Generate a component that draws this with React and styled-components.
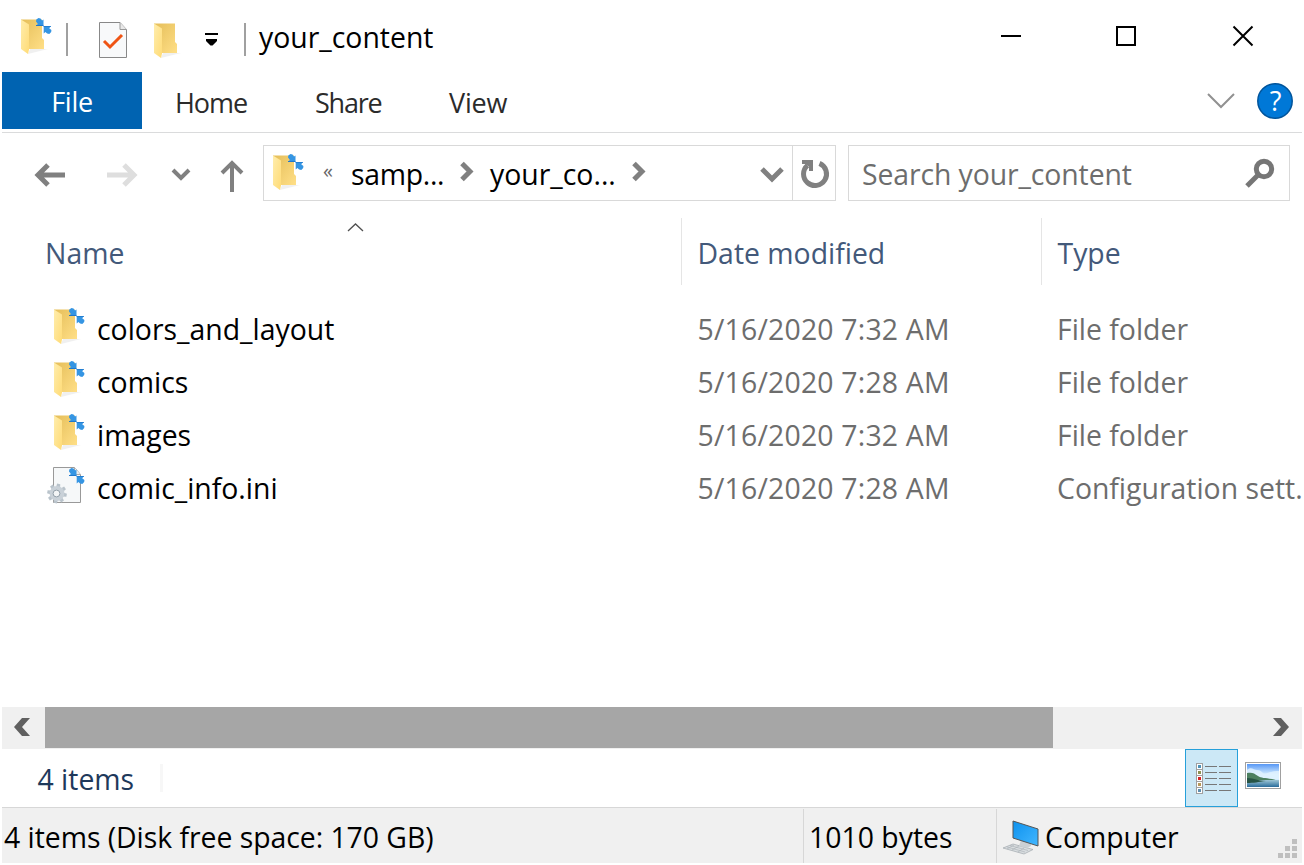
import React from "react";
import styled, { createGlobalStyle } from "styled-components";

const Global = createGlobalStyle`
  * { box-sizing: border-box; }
  body { margin: 0; background: #fff; font-family: "Open Sans", "Noto Sans", sans-serif; font-size: 28.4px; overflow: hidden; }
  svg { display: block; flex: none; overflow: visible; }
`;
const Window = styled.main`
  width: 1304px; height: 865px; padding: 0 2px 2px; background: #fff;
  display: flex; flex-direction: column; overflow: hidden;
`;
const Text = styled.span`
  flex: none; white-space: pre; line-height: 38px;
  width: ${p => p.$w ? p.$w + "px" : "auto"};
  margin-left: ${p => p.$ml || 0}px;
  padding-top: ${p => p.$drop || 0}px;
  letter-spacing: ${p => p.$ls || 0}px;
  color: ${p => p.$color || "#000"};
`;
const TabText = styled(Text)`font-size: 27px; letter-spacing: ${p => p.$ls ?? -0.8}px;`;
const Overflow = styled(Text)`font-size: 20px; line-height: 32px;`;
const Glyph = styled.svg`
  margin: ${p => p.$mt || 0}px 0 0 ${p => p.$ml || 0}px;
`;
const TitleBar = styled.header`
  height: 72px; display: flex; align-items: flex-start; padding-top: 16px; flex: none;
`;
const Divider = styled.i`
  width: 2px; height: 33px; background: #a0a0a0; margin: 7px 0 0 ${p => p.$ml}px; flex: none;
`;
const Ribbon = styled.nav`
  height: 61px; display: flex; border-bottom: 1px solid #dadbdc; flex: none;
`;
const FileTab = styled.button`
  width: 140px; height: 57px; border: 0; padding: 3px 0 0; background: #0063b1; color: #fff; font: inherit;
  display: flex; align-items: center; justify-content: center;
`;
const Tab = styled.div`
  width: ${p => p.$w}px; padding: 12px 0 0 33px; display: flex; align-items: flex-start;
`;
const RibbonEnd = styled.div`
  margin-left: auto; display: flex; padding: 10px 8px 0 0;
`;
const NavBar = styled.div`
  height: 85px; padding-top: 12px; display: flex; flex: none;
`;
const NavButtons = styled.div`
  width: 261px; height: 56px; display: flex; align-items: flex-start; padding-top: 14px;
`;
const Field = styled.div`
  width: ${p => p.$w}px; height: 56px; border: 1px solid #d9d9d9; display: flex; align-items: flex-start;
  margin-right: 12px; padding-top: 9px; flex: none;
`;
const Refresh = styled.div`
  width: 43px; height: 54px; border-left: 1px solid #d9d9d9; margin: -9px 0 0 auto; padding: 13px 0 0 7px;
`;
const HeaderRow = styled.div`
  display: grid; grid-template-columns: 680px 360px 1fr; height: 67px; flex: none;
`;
const HeaderCell = styled.div`
  border-right: ${p => p.$last ? 0 : 1}px solid #e5e5e5; padding: 16px 0 0 ${p => p.$pl}px; display: flex;
`;
const Files = styled.section`
  padding-top: 17px; height: 422px; flex: none;
`;
const FileRow = styled.div`
  height: 53px; display: grid; grid-template-columns: 95px 600.500px 359.500px 1fr; align-items: center; overflow: hidden;
`;
const IconCell = styled.div`padding: 0 0 ${p => p.$lift}px 42px;`;
const ScrollBar = styled.div`
  height: 42px; background: #f0f0f0; display: flex; align-items: flex-start; flex: none;
`;
const ScrollButton = styled.div`width: 43px; padding: 11px 0 0 12px;`;
const Thumb = styled.div`width: 1008px; height: 41px; background: #a6a6a6;`;
const Summary = styled.div`
  height: 59px; border-bottom: 1px solid #d7d7d7; display: flex; align-items: flex-start; padding-left: 35.500px; flex: none;
`;
const SummaryEdge = styled.i`width: 3px; height: 28px; background: #f7f7f7; margin: 15px 0 0 25.500px;`;
const ViewButtons = styled.div`margin-left: auto; display: flex; padding-right: 21px;`;
const DetailsButton = styled.div`
  width: 53px; height: 58px; border: 1px solid #26a0da; background: #cce8f6; padding: 13px 0 0 10px;
`;
const StatusBar = styled.footer`
  height: 55px; background: #f0f0f0; display: flex; padding-top: 1px; flex: none;
`;
const StatusPart = styled.div`
  width: ${p => p.$w ? p.$w + "px" : "auto"}; flex: ${p => p.$w ? "none" : 1};
  border-left: ${p => p.$line ? 1 : 0}px solid #d7d7d7;
  padding: 9px 0 0 ${p => p.$pl}px; display: flex;
`;

function CompressMark() {
  return (
    <g>
      <path d="M25 7.500 25.300 5.500 27.500 4 29.500 4.600 31 6.400 32.500 5.400v6.400H25l1.900-1.900z" fill="#3595e3" />
      <path d="M32.700 12h7.300l-1.800 2.200 2.200 1.800-.2 2-1.900 2-2.200-.6-1.700-1.500-1.700 1.700z" fill="#3595e3" />
      <path d="M25 11h7.500v1h7.500v.8h-7.500v-.8H25z" fill="#1f78cd" />
    </g>
  );
}

function Folder({ compressed = true, ml, mt }) {
  return (
    <Glyph width="44" height="44" viewBox="0 0 44 44" $ml={ml} $mt={mt}>
      <defs>
        <linearGradient id="folderBack" x1="0" x2="1" y2="1"><stop stopColor="#e5be59" /><stop offset="1" stopColor="#ffdf87" /></linearGradient>
        <linearGradient id="folderFlap" x1="0" x2="1" y2="1"><stop stopColor="#ffedac" /><stop offset="1" stopColor="#ffdb76" /></linearGradient>
      </defs>
      <path d="M17 40 37 35H19z" fill="#f0f0f0" />
      <path d="M10 5.500h21v18.500l2 2v9H10z" fill="url(#folderBack)" />
      <path d="m10 5.500 8 5v25l-1 4.500-7-5z" fill="url(#folderFlap)" />
      {compressed && <CompressMark />}
    </Glyph>
  );
}

function IniFile() {
  const teeth = [0, 45, 90, 135, 180, 225, 270, 315];
  return (
    <svg width="44" height="44" viewBox="0 0 44 44">
      <path d="M9.500 3.500h21l6 7v28h-27z" fill="#f6f8f9" stroke="#999" />
      <path d="M30.500 3.500v7h6" fill="#eee" stroke="#aaa" />
      <g transform="translate(13 29.500)">
        {teeth.map(a => <path key={a} d="M-2-6-1.600-9.800H1.600L2-6z" fill="#b9c3cb" transform={`rotate(${a + 10})`} />)}
        <circle r="7.400" fill="#c9d1d8" />
        <circle r="3.400" cx="-.5" fill="#f3f5f6" stroke="#93a0aa" />
      </g>
      <CompressMark />
    </svg>
  );
}

function Stroke({ d, w, h, width = 4, color = "#808080", ml, mt }) {
  return <Glyph width={w} height={h} viewBox={`0 0 ${w} ${h}`} $ml={ml} $mt={mt}><path d={d} fill="none" stroke={color} strokeWidth={width} /></Glyph>;
}

function DetailsIcon() {
  const marks = ["#4b91b7", "#8c9252", "#d42222", "#b79959", "#5b8eb1"];
  return (
    <svg width="35" height="31" viewBox="0 0 35 31">
      {marks.map((c, i) => (
        <g key={c} transform={`translate(0 ${i * 6})`}>
          <rect x=".5" y=".5" width="6" height="6" fill="#fff" stroke="#a0a0a0" />
          <rect x="2" y="2" width="3" height="3" fill={c} />
          <path d="M9 3.500h12M23 3.500h12" stroke="#777" />
        </g>
      ))}
    </svg>
  );
}

function PictureIcon() {
  return (
    <Glyph width="36" height="27" viewBox="0 0 36 27" $ml={7} $mt={13}>
      <defs>
        <linearGradient id="sky" x2="0" y2="1"><stop stopColor="#5797f5" /><stop offset=".6" stopColor="#d3edff" /></linearGradient>
        <linearGradient id="lake" x2="0" y2="1"><stop stopColor="#9fc6d5" /><stop offset="1" stopColor="#296c9b" /></linearGradient>
      </defs>
      <rect x=".5" y=".5" width="35" height="26" fill="#fff" stroke="#a0a0a0" />
      <path d="M2 2h32v17H2z" fill="url(#sky)" />
      <path d="M2 8c4-4 7 0 10 0s4 1 6 3 6-2 16-2v8H2z" fill="#e1f2ff" opacity=".8" />
      <path d="M2 11c5-1 7 0 11 3s9 1 21 5H2z" fill="#4c8060" />
      <path d="M2 18h32v7H2z" fill="url(#lake)" />
      <path d="M2 16c8 0 10 3 19 3-8 1-12 2-19 2z" fill="#275445" />
    </Glyph>
  );
}

function ComputerIcon() {
  return (
    <Glyph width="38" height="36" viewBox="0 0 38 36" $ml={4} $mt={2}>
      <defs><linearGradient id="screen" x2="1" y2="1"><stop stopColor="#0d91ed" /><stop offset="1" stopColor="#43b7ff" /></linearGradient></defs>
      <path d="m1 28 10-4 20 5.500-9 4.500z" fill="#d9dde0" stroke="#a0a8ae" strokeWidth=".7" />
      <path d="m5 27 18 5M8 25.500l18 5M12 25l-7 4M17 26l-7 4M22 28l-6 4" stroke="#a7aeb3" strokeWidth=".6" />
      <path d="m19 20 10 3v3l-4 2-8-2z" fill="#cbd0d4" />
      <path d="m11 1 25 8v17L11 18z" fill="url(#screen)" stroke="#555" />
    </Glyph>
  );
}

const files = [
  ["colors_and_layout", "5/16/2020 7:32 AM", "File folder"],
  ["comics", "5/16/2020 7:28 AM", "File folder"],
  ["images", "5/16/2020 7:32 AM", "File folder"],
  ["comic_info.ini", "5/16/2020 7:28 AM", "Configuration sett."],
];

export default function App() {
  return (
    <Window>
      <Global />
      <TitleBar>
        <Folder ml={9} mt={-2} />
        <Divider $ml={11} />
        <Glyph width="28" height="36" viewBox="0 0 28 36" $ml={31} $mt={6}>
          <path d="M.5.500h20.500l6.500 7v28H.500z" fill="#f8f9fa" stroke="#888" />
          <path d="M21 .500v7h6.500" fill="#e8e8e8" stroke="#999" />
          <path d="m5 19 6 6L23 13" fill="none" stroke="#ef5414" strokeWidth="3" />
        </Glyph>
        <Folder compressed={false} ml={17} mt={2} />
        <Glyph width="13" height="30" viewBox="0 0 13 30" $ml={17}><path d="M0 17h13v2H0zM1 23h11v2l-4.500 4.500h-2L1 25z" /></Glyph>
        <Divider $ml={26} />
        <Text $ml={13} $w={742} $drop={2}>your_content</Text>
        <Glyph width="20" height="40" viewBox="0 0 20 40"><path d="M0 20h20" stroke="#000" strokeWidth="2" /></Glyph>
        <Glyph width="20" height="40" viewBox="0 0 20 40" $ml={95}><path d="M1 11h18v18H1z" fill="none" stroke="#000" strokeWidth="2" /></Glyph>
        <Glyph width="20" height="40" viewBox="0 0 20 40" $ml={97}><path d="m.5 10.500 19 19m0-19-19 19" stroke="#000" strokeWidth="2" /></Glyph>
      </TitleBar>
      <Ribbon>
        <FileTab><TabText $color="#fff" $ls={-0.3}>File</TabText></FileTab>
        <Tab $w={140}><TabText $color="#2b2b2b" $ls={-1.05}>Home</TabText></Tab>
        <Tab $w={134}><TabText $color="#2b2b2b" $ls={-1.2}>Share</TabText></Tab>
        <Tab $w={120}><TabText $color="#2b2b2b" $ls={-0.2}>View</TabText></Tab>
        <RibbonEnd>
          <Stroke w={28} h={38} d="m1 12 13 13 13-13" width={2} color="#919191" />
          <Glyph width="38" height="38" viewBox="0 0 38 38" $ml={21}>
            <circle cx="19" cy="19" r="17.200" fill="#0078d7" stroke="#00549b" strokeWidth="1.500" />
            <text x="19.500" y="28.500" textAnchor="middle" fontSize="27" fontWeight="500" fill="#fff">?</text>
          </Glyph>
        </RibbonEnd>
      </Ribbon>
      <NavBar>
        <NavButtons>
          <Stroke ml={32} w={32} h={32} width={5} d="M31 16H3M14 6 4 16l10 10" />
          <Stroke ml={40} w={32} h={32} width={5} color="#dedede" d="M1 16h28M18 6l10 10-10 10" />
          <Stroke ml={33} w={20} h={32} d="m2 11 8 8 8-8" />
          <Stroke ml={29} w={24} h={34} d="M12 33V4M2 14 12 4l10 10" />
        </NavButtons>
        <Field $w={573}>
          <Folder ml={-1} mt={-5} />
          <Overflow $ml={16} $w={28} $color="#666">«</Overflow>
          <Text $w={107} $ls={-0.3}>samp...</Text>
          <Stroke ml={2} w={14} h={32} width={5} d="m2 8.500 8 8-8 8" />
          <Text $ml={16} $w={141}>your_co...</Text>
          <Stroke ml={1} w={14} h={32} width={5} d="m2 8.500 8 8-8 8" />
          <Stroke ml={114} w={24} h={34} width={5} d="m2 14 10 10 10-10" />
          <Refresh>
            <svg width="30" height="30" viewBox="0 0 30 30"><path d="M7.500 6.300A11.500 11.500 0 1 0 19.500 4.400" fill="none" stroke="#808080" strokeWidth="5" /><path d="M2 1h11v11H9V7.500L5 5H2z" fill="#808080" /></svg>
          </Refresh>
        </Field>
        <Field $w={442}>
          <Text $ml={13} $w={382} $ls={-0.1} $color="#6d6d6d">Search your_content</Text>
          <Glyph width="30" height="34" viewBox="0 0 30 34"><circle cx="20" cy="14" r="7.700" fill="none" stroke="#767676" strokeWidth="5" /><path d="M15 19 3 31" stroke="#767676" strokeWidth="5" /></Glyph>
        </Field>
      </NavBar>
      <HeaderRow>
        <HeaderCell $pl={43}>
          <Text $w={302} $color="#43597a">Name</Text>
          <Glyph width="16" height="10" viewBox="0 0 16 10" $mt={-12}><path d="m1 9 7.500-7 7.500 7" fill="none" stroke="#505050" strokeWidth="1.300" /></Glyph>
        </HeaderCell>
        <HeaderCell $pl={15.5}><Text $color="#43597a">Date modified</Text></HeaderCell>
        <HeaderCell $pl={15.5} $last><Text $color="#43597a">Type</Text></HeaderCell>
      </HeaderRow>
      <Files>
        {files.map(([name, date, type], i) => (
          <FileRow key={name}>
            <IconCell $lift={i < 3 ? 5 : 3}>{i < 3 ? <Folder /> : <IniFile />}</IconCell>
            <Text>{name}</Text><Text $ls={0.2} $color="#6d6d6d">{date}</Text><Text $color="#6d6d6d">{type}</Text>
          </FileRow>
        ))}
      </Files>
      <ScrollBar>
        <ScrollButton><Glyph width="16" height="18" viewBox="0 0 16 18"><path d="M8 0h8L8 9l8 9H8L0 9z" fill="#606060" /></Glyph></ScrollButton>
        <Thumb />
        <Glyph width="16" height="18" viewBox="0 0 16 18" $ml={220} $mt={11}><path d="M8 0H0l8 9-8 9h8l8-9z" fill="#606060" /></Glyph>
      </ScrollBar>
      <Summary>
        <Text $w={97} $drop={11} $color="#1e395b">4 items</Text><SummaryEdge />
        <ViewButtons><DetailsButton><DetailsIcon /></DetailsButton><PictureIcon /></ViewButtons>
      </Summary>
      <StatusBar>
        <StatusPart $w={801} $pl={2}><Text $ls={-0.04}>4 items (Disk free space: 170 GB)</Text></StatusPart>
        <StatusPart $w={193} $pl={5} $line><Text>1010 bytes</Text></StatusPart>
        <StatusPart $pl={1} $line>
          <ComputerIcon /><Text $ml={5} $w={233}>Computer</Text>
          <Glyph width="20" height="20" viewBox="0 0 20 20" $mt={21}><path d="M14 0h5v5h-5zM7 7h5v5H7zM14 7h5v5h-5zM0 14h5v5H0zM7 14h5v5H7zM14 14h5v5h-5z" fill="#bfbfbf" /></Glyph>
        </StatusPart>
      </StatusBar>
    </Window>
  );
}
